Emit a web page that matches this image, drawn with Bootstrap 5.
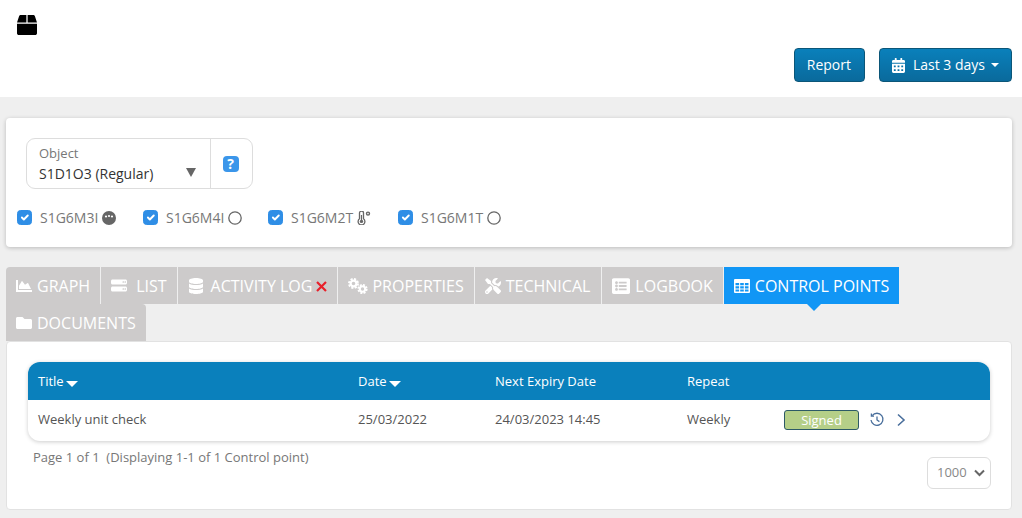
<!DOCTYPE html>
<html lang="en">
<head>
    <meta charset="UTF-8">
    <meta name="viewport" content="width=device-width, initial-scale=1.0">
    <title>Control Points</title>
    <link href="https://cdn.jsdelivr.net/npm/bootstrap@5.3.0/dist/css/bootstrap.min.css" rel="stylesheet">
    <style>
        body { background: #efefef; font-family: "Open Sans", "Liberation Sans", sans-serif; color: #555; font-size: 13px; height: 518px; overflow: hidden; }
        svg { fill: currentColor; flex-shrink: 0; }

        /* top header */
        .top-bar { background: #fff; height: 97px; padding: 15px 10px 0 17px; }
        .box-icon { display: block; width: 20px; height: 20px; color: #000; }
        .top-actions { margin-top: 13px; gap: 14px; }
        .btn-blue { height: 34px; padding: 0 12px 2px; font-size: 14px; color: #fff; border: 1px solid #0b5678; border-radius: 4px; background: linear-gradient(#0a80bb, #0a6a9c); display: flex; align-items: center; }
        .btn-blue:hover { color: #fff; }
        .btn-report { padding-right: 13px; }
        .btn-blue svg { width: 13px; height: 15px; margin: 2px 8px 0 0; }
        .caret-down { width: 0; height: 0; border: 4px solid transparent; border-top-color: #fff; border-bottom: 0; margin: 2px 0 0 6px; }

        /* object filter card */
        .filter-card { margin: 21px 10px 20px 6px; height: 129px; padding: 20px 11px; border: 0; border-radius: 4px; box-shadow: 0 1px 4px rgba(0,0,0,.22); }
        .object-picker { margin-left: 9px; width: 227px; height: 51px; border: 1px solid #ddd; border-radius: 9px; }
        .object-field { width: 184px; padding: 5px 12px; border-right: 1px solid #ddd; position: relative; }
        .object-label { color: #777; font-size: 13px; line-height: 19px; }
        .object-value { color: #333; font-size: 14px; line-height: 21px; }
        .object-arrow { position: absolute; right: 14px; top: 29px; width: 0; height: 0; border: 5px solid transparent; border-top: 9px solid #666; border-bottom: 0; }
        .help-wrap { flex: 1; }
        .help-icon { width: 16px; height: 16px; margin: 1px 2px 0 0; border-radius: 4px; background: #3b96ea; color: #fff; font-weight: 700; font-size: 14px; line-height: 16px; text-align: center; }
        .sensor-row { margin-top: 18px; }
        .sensor-item { display: flex; align-items: center; min-height: 0; padding: 0; margin: 0; color: #777; font-size: 14px; }
        .sensor-item .form-check-input { width: 15px; height: 15px; margin: 0 8px 0 0; float: none; background-color: #2f8ee6; border-color: #2f8ee6; }
        .sensor-item svg { width: 14px; height: 14px; margin-left: 4px; color: #666; }
        .sensor-a { width: 126px; }
        .sensor-b { width: 125px; }
        .sensor-c { width: 130px; }

        /* tabs */
        .tab-strip { margin: 0 10px 0 6px; display: flex; flex-wrap: wrap; }
        .tab-link { height: 37px; display: flex; align-items: center; padding: 0 10px; background: #cdcbcb; color: #fff; font-size: 16px; text-decoration: none; border-right: 1px solid #efefef; position: relative; white-space: nowrap; }
        .tab-link:hover { color: #fff; }
        .tab-link svg { height: 16px; width: 16px; margin-right: 5px; }
        .tab-link .icon-gears { width: 20px; margin-right: 4px; }
        .tab-link .icon-db { margin-right: 7px; }
        .tab-link .icon-log { width: 18px; height: 18px; }
        .tab-link .tab-x { width: 11px; height: 11px; margin: 1px 0 0 4px; color: #e8202a; }
        .tab-tech { padding-right: 11px; }
        .tab-first { border-top-left-radius: 4px; }
        .tab-second { border-top-right-radius: 4px; border-right: 0; }
        .tab-link.is-active { background: #1196f5; border-right: 0; }
        .tab-link.is-active::after { content: ""; position: absolute; left: 50%; bottom: -7px; margin-left: -5px; border: 7px solid transparent; border-top-color: #1196f5; border-bottom: 0; }

        /* control points card */
        .points-card { margin: 0 10px 0 6px; height: 169px; padding: 20px 21px 0; border: 1px solid #e2e2e2; border-radius: 4px; box-shadow: none; }
        .points-wrap { border-radius: 12px; overflow: hidden; box-shadow: 0 1px 4px rgba(0,0,0,.2); }
        .points-table { margin: 0; table-layout: fixed; font-size: 13px; }
        .points-table th { background: #0a80bc; color: #fff; font-weight: 400; height: 38px; padding: 1px 0 0 10px; border: 0; vertical-align: middle; font-size: 13px; }
        .points-table td { height: 41px; padding: 0 0 2px 10px; border: 0; vertical-align: middle; color: #555; }
        .points-table .row-icons { padding: 0 0 0 10px; }
        .sort-caret { display: inline-block; width: 0; height: 0; border: 6px solid transparent; border-top: 6px solid #fff; border-bottom: 0; margin-left: 2px; vertical-align: -1px; }
        .signed-tag { display: inline-block; width: 75px; height: 20px; line-height: 18px; text-align: center; background: #b5cf88; color: #fff; border: 1px solid #2d5a66; border-radius: 3px; }
        .row-icons svg { fill: none; stroke: #4a6f9c; stroke-width: 1.3; width: 16px; height: 16px; vertical-align: -3px; }
        .row-icons .icon-history { margin-left: 7px; }
        .row-icons .icon-next { margin-left: 4px; stroke-width: 1.6; }
        .page-note { margin: 7px 0 0 5px; color: #777; font-size: 13px; }
        .page-size { width: 64px; height: 32px; margin: 16px -1px 0 auto; padding: 0 0 0 9px; font-size: 13px; color: #888; border-color: #ddd; background-position: right 5px center; background-size: 11px 8px; background-image: url("data:image/svg+xml,%3csvg xmlns='http://www.w3.org/2000/svg' viewBox='0 0 11 8'%3e%3cpath fill='none' stroke='%23666' stroke-width='2' d='M1 1.500 5.500 6 10 1.500'/%3e%3c/svg%3e"); }
    </style>
</head>

<body>
    <!-- header with logo and report buttons -->
    <div class="top-bar">
        <svg class="box-icon" viewBox="0 0 512 512"><path d="M509.5 184.6L458.9 32.8C452.4 13.2 434.1 0 413.4 0H272v192h238.7c-.4-2.5-.4-5-1.2-7.4zM240 0H98.6c-20.7 0-39 13.2-45.5 32.8L2.5 184.6c-.8 2.4-.8 4.9-1.2 7.4H240V0zM0 224v240c0 26.5 21.5 48 48 48h416c26.5 0 48-21.5 48-48V224H0z"/></svg>
        <div class="top-actions d-flex justify-content-end">
            <a href="#" class="btn btn-blue btn-report">Report</a>
            <a href="#" class="btn btn-blue">
                <svg viewBox="0 0 448 512"><path d="M0 464c0 26.5 21.5 48 48 48h352c26.5 0 48-21.5 48-48V192H0v272zm320-196c0-6.6 5.4-12 12-12h40c6.6 0 12 5.4 12 12v40c0 6.6-5.4 12-12 12h-40c-6.6 0-12-5.4-12-12v-40zm0 128c0-6.6 5.4-12 12-12h40c6.6 0 12 5.4 12 12v40c0 6.6-5.4 12-12 12h-40c-6.6 0-12-5.4-12-12v-40zM192 268c0-6.6 5.4-12 12-12h40c6.6 0 12 5.4 12 12v40c0 6.6-5.4 12-12 12h-40c-6.6 0-12-5.4-12-12v-40zm0 128c0-6.6 5.4-12 12-12h40c6.6 0 12 5.4 12 12v40c0 6.6-5.4 12-12 12h-40c-6.6 0-12-5.4-12-12v-40zM64 268c0-6.6 5.4-12 12-12h40c6.6 0 12 5.4 12 12v40c0 6.6-5.4 12-12 12H76c-6.6 0-12-5.4-12-12v-40zm0 128c0-6.6 5.4-12 12-12h40c6.6 0 12 5.4 12 12v40c0 6.6-5.4 12-12 12H76c-6.6 0-12-5.4-12-12v-40zM400 64h-48V16c0-8.8-7.2-16-16-16h-32c-8.8 0-16 7.2-16 16v48H160V16c0-8.8-7.2-16-16-16h-32c-8.8 0-16 7.2-16 16v48H48C21.5 64 0 85.5 0 112v48h448v-48c0-26.5-21.5-48-48-48z"/></svg>
                Last 3 days
                <span class="caret-down"></span>
            </a>
        </div>
    </div>

    <!-- object picker and sensors -->
    <div class="card filter-card">
        <div class="object-picker d-flex">
            <div class="object-field">
                <div class="object-label">Object</div>
                <div class="object-value">S1D1O3 (Regular)</div>
                <span class="object-arrow"></span>
            </div>
            <div class="help-wrap d-flex align-items-center justify-content-center">
                <div class="help-icon">?</div>
            </div>
        </div>
        <div class="sensor-row d-flex">
            <label class="form-check sensor-item sensor-a">
                <input class="form-check-input" type="checkbox" checked>S1G6M3I
                <svg viewBox="0 0 14 14"><circle cx="7" cy="7" r="7"/><circle cx="4" cy="5.500" r="1.100" fill="#fff"/><circle cx="7" cy="5" r="1.100" fill="#fff"/><circle cx="10" cy="5.500" r="1.100" fill="#fff"/></svg>
            </label>
            <label class="form-check sensor-item sensor-b">
                <input class="form-check-input" type="checkbox" checked>S1G6M4I
                <svg viewBox="0 0 14 14"><circle cx="7" cy="7" r="6.200" fill="none" stroke="currentColor" stroke-width="1.300"/></svg>
            </label>
            <label class="form-check sensor-item sensor-c">
                <input class="form-check-input" type="checkbox" checked>S1G6M2T
                <svg viewBox="0 0 14 14"><path d="M2.500 2a2 2 0 0 1 4 0v5.800a3.400 3.400 0 1 1-4 0z" fill="none" stroke="currentColor" stroke-width="1.300"/><circle cx="4.500" cy="10.400" r="1.700"/><rect x="3.900" y="4" width="1.200" height="6"/><circle cx="11" cy="2.600" r="1.500" fill="none" stroke="currentColor" stroke-width="1.400"/></svg>
            </label>
            <label class="form-check sensor-item">
                <input class="form-check-input" type="checkbox" checked>S1G6M1T
                <svg viewBox="0 0 14 14"><circle cx="7" cy="7" r="6.200" fill="none" stroke="currentColor" stroke-width="1.300"/></svg>
            </label>
        </div>
    </div>

    <!-- tabs -->
    <div class="tab-strip">
        <a href="#" class="tab-link tab-first">
            <svg viewBox="0 0 512 512"><path d="M500 384c6.600 0 12 5.400 12 12v40c0 6.600-5.400 12-12 12H12c-6.600 0-12-5.400-12-12V76c0-6.600 5.400-12 12-12h40c6.600 0 12 5.400 12 12v308h436zM372.700 159.500L288 216l-85.300-113.700c-5.100-6.800-15.500-6.300-19.900 1L96 248v104h384l-89.900-187.800c-3.200-6.500-11.400-8.700-17.400-4.700z"/></svg>GRAPH
        </a>
        <a href="#" class="tab-link">
            <svg viewBox="0 0 512 512"><path fill-rule="evenodd" d="M48 48h416c26 0 48 22 48 48v64c0 26-22 48-48 48H48c-26 0-48-22-48-48V96c0-26 22-48 48-48zm320 80a24 24 0 1 0 0-.1zm64 0a24 24 0 1 0 0-.1zM48 272h416c26 0 48 22 48 48v64c0 26-22 48-48 48H48c-26 0-48-22-48-48v-64c0-26 22-48 48-48zm320 80a24 24 0 1 0 0-.1zm64 0a24 24 0 1 0 0-.1z"/></svg>&nbsp;LIST
        </a>
        <a href="#" class="tab-link">
            <svg class="icon-db" viewBox="0 0 448 512"><path d="M448 73.143v45.714C448 159.143 347.667 192 224 192S0 159.143 0 118.857V73.143C0 32.857 100.333 0 224 0s224 32.857 224 73.143zM448 176v102.857C448 319.143 347.667 352 224 352S0 319.143 0 278.857V176c48.125 33.143 136.208 48.572 224 48.572S399.874 209.143 448 176zm0 160v102.857C448 479.143 347.667 512 224 512S0 479.143 0 438.857V336c48.125 33.143 136.208 48.572 224 48.572S399.874 369.143 448 336z"/></svg>ACTIVITY LOG<svg class="tab-x" viewBox="0 0 11 11"><path d="M1 1l9 9M10 1l-9 9" stroke="currentColor" stroke-width="2.200" fill="none"/></svg>
        </a>
        <a href="#" class="tab-link">
            <svg class="icon-gears" viewBox="0 0 20 16"><circle cx="5.500" cy="5.500" r="2.900" fill="none" stroke="currentColor" stroke-width="2.200"/><circle cx="5.500" cy="5.500" r="4.500" fill="none" stroke="currentColor" stroke-width="2" stroke-dasharray="2.100 1.430"/><circle cx="14.500" cy="11" r="2.700" fill="none" stroke="currentColor" stroke-width="2"/><circle cx="14.500" cy="11" r="4.200" fill="none" stroke="currentColor" stroke-width="1.800" stroke-dasharray="2 1.300"/></svg>PROPERTIES
        </a>
        <a href="#" class="tab-link tab-tech">
            <svg viewBox="0 0 512 512"><path d="M501.100 395.700L384 278.600c-23.100-23.100-57.600-27.600-85.400-13.900L192 158.100V96L64 0 0 64l96 128h62.100l106.600 106.600c-13.600 27.800-9.200 62.300 13.900 85.400l117.100 117.100c14.600 14.600 38.200 14.600 52.700 0l52.700-52.700c14.500-14.600 14.500-38.200 0-52.700zM331.700 225c28.300 0 54.900 11 74.900 31l19.400 19.400c15.800-6.900 30.800-16.500 43.800-29.500 37.100-37.100 49.700-89.300 37.900-136.700-2.200-9-13.500-12.100-20.100-5.500l-74.400 74.400-67.900-11.300L334 98.900l74.400-74.400c6.600-6.600 3.400-17.900-5.700-20.200-47.400-11.700-99.600.9-136.600 37.900-28.500 28.500-41.900 66.100-41.200 103.600l82.100 82.100c8.100-1.900 16.500-2.900 24.700-2.900zm-103.900 82l-56.700-56.700L18.700 402.800c-25 25-25 65.500 0 90.500s65.500 25 90.500 0l123.600-123.600c-7.600-19.900-9.900-41.600-5-62.700zM64 472c-13.200 0-24-10.800-24-24 0-13.300 10.700-24 24-24s24 10.700 24 24c0 13.200-10.700 24-24 24z"/></svg>TECHNICAL
        </a>
        <a href="#" class="tab-link">
            <svg class="icon-log" viewBox="0 0 512 512"><path d="M464 480H48c-26.510 0-48-21.490-48-48V80c0-26.510 21.490-48 48-48h416c26.510 0 48 21.490 48 48v352c0 26.510-21.490 48-48 48zM128 120c-22.091 0-40 17.909-40 40s17.909 40 40 40 40-17.909 40-40-17.909-40-40-40zm0 96c-22.091 0-40 17.909-40 40s17.909 40 40 40 40-17.909 40-40-17.909-40-40-40zm0 96c-22.091 0-40 17.909-40 40s17.909 40 40 40 40-17.909 40-40-17.909-40-40-40zm288-136v-32c0-6.627-5.373-12-12-12H204c-6.627 0-12 5.373-12 12v32c0 6.627 5.373 12 12 12h200c6.627 0 12-5.373 12-12zm0 96v-32c0-6.627-5.373-12-12-12H204c-6.627 0-12 5.373-12 12v32c0 6.627 5.373 12 12 12h200c6.627 0 12-5.373 12-12zm0 96v-32c0-6.627-5.373-12-12-12H204c-6.627 0-12 5.373-12 12v32c0 6.627 5.373 12 12 12h200c6.627 0 12-5.373 12-12z"/></svg>LOGBOOK
        </a>
        <a href="#" class="tab-link is-active">
            <svg viewBox="0 0 16 14"><path fill-rule="evenodd" d="M1 0h14a1 1 0 0 1 1 1v12a1 1 0 0 1-1 1H1a1 1 0 0 1-1-1V1a1 1 0 0 1 1-1zm.5 4v2.200h3.600V4zm4.700 0v2.200h3.600V4zm4.700 0v2.200h3.600V4zM1.500 7.200v2.200h3.600V7.200zm4.700 0v2.200h3.600V7.200zm4.700 0v2.200h3.600V7.200zM1.500 10.400v2.200h3.600v-2.200zm4.700 0v2.200h3.600v-2.200zm4.700 0v2.200h3.600v-2.200z"/></svg>CONTROL POINTS
        </a>
        <a href="#" class="tab-link tab-second">
            <svg viewBox="0 0 512 512"><path d="M464 128H272l-64-64H48C21.490 64 0 85.490 0 112v288c0 26.510 21.490 48 48 48h416c26.510 0 48-21.490 48-48V176c0-26.510-21.490-48-48-48z"/></svg>DOCUMENTS
        </a>
    </div>

    <!-- control points list -->
    <div class="card points-card">
        <div class="points-wrap">
            <table class="table points-table">
                <colgroup>
                    <col style="width: 320px">
                    <col style="width: 137px">
                    <col style="width: 192px">
                    <col style="width: 97px">
                    <col>
                </colgroup>
                <thead>
                    <tr>
                        <th>Title<span class="sort-caret"></span></th>
                        <th>Date<span class="sort-caret"></span></th>
                        <th>Next Expiry Date</th>
                        <th>Repeat</th>
                        <th></th>
                    </tr>
                </thead>
                <tbody>
                    <tr>
                        <td>Weekly unit check</td>
                        <td>25/03/2022</td>
                        <td>24/03/2023 14:45</td>
                        <td>Weekly</td>
                        <td class="row-icons">
                            <span class="signed-tag">Signed</span>
                            <svg class="icon-history" viewBox="0 0 16 16"><path d="M3.200 3.600A6 6 0 1 1 2 8"/><path d="M2.400 1.600v2.600H5"/><path d="M8 4.600V8l2.400 1.600"/></svg>
                            <svg class="icon-next" viewBox="0 0 16 16"><path d="M5 2.500 11 8l-6 5.500"/></svg>
                        </td>
                    </tr>
                </tbody>
            </table>
        </div>
        <div class="d-flex align-items-start">
            <div class="page-note">Page 1 of 1 &nbsp;(Displaying 1-1 of 1 Control point)</div>
            <select class="form-select page-size">
                <option>1000</option>
            </select>
        </div>
    </div>

    <script src="https://cdn.jsdelivr.net/npm/bootstrap@5.3.0/dist/js/bootstrap.bundle.min.js"></script>
</body>
</html>
